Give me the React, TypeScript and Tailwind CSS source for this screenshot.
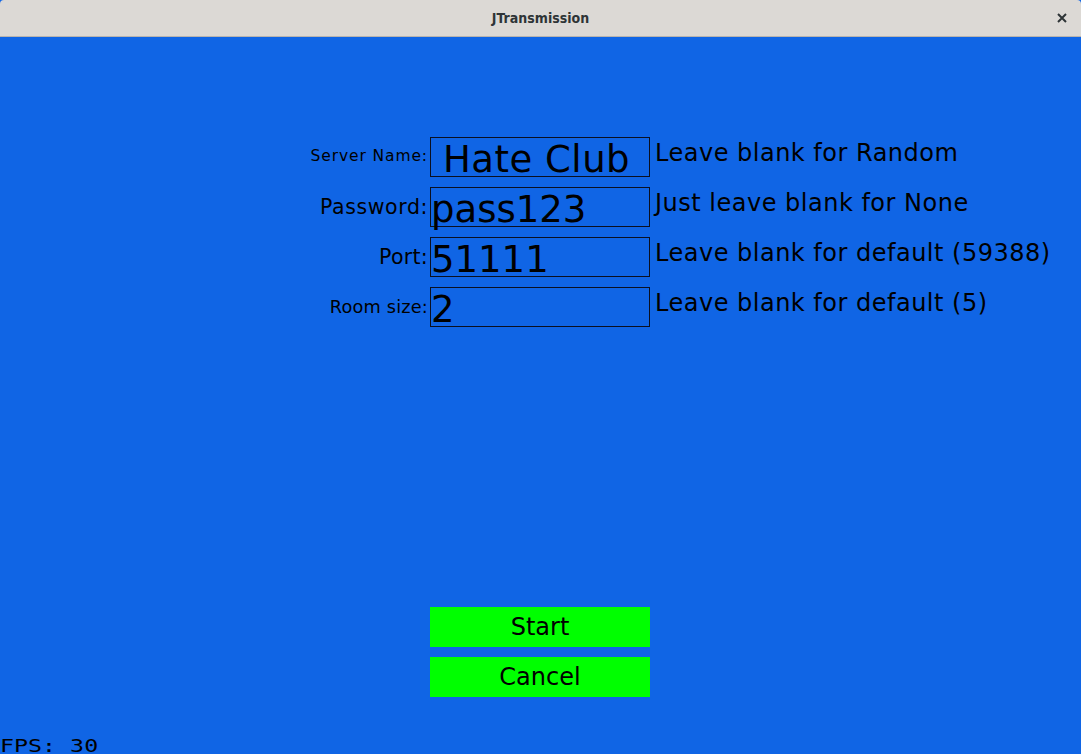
const fields = [
  { label: "Server Name:", labelSize: "text-[15.5px] tracking-[0.9px]", value: "Hate Club", pad: "pl-[12px] tracking-[0.5px]", hint: "Leave blank for Random" },
  { label: "Password:", labelSize: "text-[20.5px] tracking-[0.6px]", value: "pass123", pad: "pl-0", hint: "Just leave blank for None" },
  { label: "Port:", labelSize: "text-[20.5px] tracking-[0.3px]", value: "51111", pad: "pl-0", hint: "Leave blank for default (59388)" },
  { label: "Room size:", labelSize: "text-[17.7px] tracking-[0.2px]", value: "2", pad: "pl-0", hint: "Leave blank for default (5)" },
];

function TitleBar() {
  return (
    <div className="relative flex h-[37px] shrink-0 items-center justify-center rounded-t-[4px] border-b border-[#b9b4ae] bg-[#dcd9d5]">
      <div className="font-['DejaVu_Sans_Condensed','DejaVu_Sans',sans-serif] text-[14px] font-bold text-[#2e3436]">
        JTransmission
      </div>
      <div className="absolute right-[14px] top-[13px] flex h-[10px] w-[10px]">
        <svg width="10" height="10" viewBox="0 0 10 10">
          <path d="M1 1 L9 9 M9 1 L1 9" stroke="#2e3436" strokeWidth="2" />
        </svg>
      </div>
    </div>
  );
}

export default function App() {
  return (
    <div className="flex h-[754px] w-[1081px] flex-col overflow-hidden bg-[#1065e5] font-['DejaVu_Sans',sans-serif] text-black">
      <TitleBar />
      <div className="flex flex-col gap-[10px] pt-[100px]">
        {fields.map((f) => (
          <div key={f.label} className="flex h-[40px]">
            <div className={`flex w-[428px] items-center justify-end ${f.labelSize}`}>{f.label}</div>
            <div className={`ml-[2px] h-[40px] w-[220px] shrink-0 border border-[#0b1020] ${f.pad}`}>
              <div className="whitespace-nowrap pt-[3px] text-[37px] leading-[37px]">{f.value}</div>
            </div>
            <div className="ml-[5px] whitespace-nowrap pt-[4px] text-[24px] leading-none tracking-[0.5px]">
              {f.hint}
            </div>
          </div>
        ))}
      </div>
      <div className="ml-[430px] mt-[280px] flex w-[220px] flex-col gap-[10px]">
        <button className="flex h-[40px] items-center justify-center bg-[#00ff00] text-[24px]">Start</button>
        <button className="flex h-[40px] items-center justify-center bg-[#00ff00] text-[24px]">Cancel</button>
      </div>
      <div className="mt-[42px] h-[14px] shrink-0 origin-left scale-x-[1.37] whitespace-nowrap font-['DejaVu_Sans_Mono',monospace] text-[17px] leading-[14px]">
        FPS: 30
      </div>
    </div>
  );
}
